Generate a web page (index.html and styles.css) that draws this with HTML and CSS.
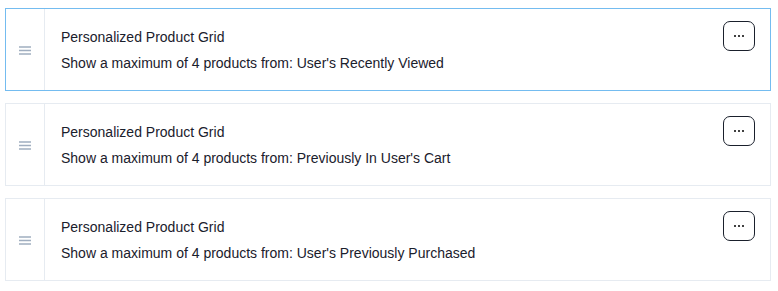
FILE: index.html
```html
<!DOCTYPE html>
<html lang="en">
<head>
    <meta charset="UTF-8">
    <meta name="viewport" content="width=device-width, initial-scale=1.0">
    <title>Blocks</title>
    <link rel="stylesheet" href="styles.css">
</head>
<body>
    <div class="block-list">
        <div class="block active">
            <div class="handle">
                <svg width="12" height="9" viewBox="0 0 12 9"><path d="M0 1h12M0 4.5h12M0 8h12" stroke="#a0aec0" stroke-width="1.3"/></svg>
            </div>
            <div class="body">
                <div class="title">Personalized Product Grid</div>
                <div class="desc">Show a maximum of 4 products from: User's Recently Viewed</div>
            </div>
            <button class="more"><span></span><span></span><span></span></button>
        </div>
        <div class="block">
            <div class="handle">
                <svg width="12" height="9" viewBox="0 0 12 9"><path d="M0 1h12M0 4.5h12M0 8h12" stroke="#a0aec0" stroke-width="1.3"/></svg>
            </div>
            <div class="body">
                <div class="title">Personalized Product Grid</div>
                <div class="desc">Show a maximum of 4 products from: Previously In User's Cart</div>
            </div>
            <button class="more"><span></span><span></span><span></span></button>
        </div>
        <div class="block">
            <div class="handle">
                <svg width="12" height="9" viewBox="0 0 12 9"><path d="M0 1h12M0 4.5h12M0 8h12" stroke="#a0aec0" stroke-width="1.3"/></svg>
            </div>
            <div class="body">
                <div class="title">Personalized Product Grid</div>
                <div class="desc">Show a maximum of 4 products from: User's Previously Purchased</div>
            </div>
            <button class="more"><span></span><span></span><span></span></button>
        </div>
    </div>
</body>
</html>
```
FILE: styles.css
```css
* {
    box-sizing: border-box;
}

body {
    margin: 0;
    padding: 8px 7px 8px 5px;
    background: #fff;
    font-family: "Liberation Sans", Arial, sans-serif;
    font-size: 14px;
    color: #1a202c;
}

.block-list {
    display: flex;
    flex-direction: column;
    gap: 12px;
}

.block {
    display: flex;
    align-items: stretch;
    height: 83px;
    border: 1px solid #e6ebf1;
    background: #fff;
}

.block.active {
    border-color: #74bcf0;
}

.handle {
    width: 39px;
    flex-shrink: 0;
    display: flex;
    align-items: center;
    justify-content: center;
    border-right: 1px solid #e6ebf1;
    padding-top: 2px;
}

.body {
    flex: 1;
    padding: 18px 16px 0;
}

.title,
.desc {
    line-height: 20px;
}

.desc {
    margin-top: 6px;
}

.more {
    flex-shrink: 0;
    align-self: flex-start;
    margin: 12px 15px 0 0;
    width: 32px;
    height: 30px;
    padding: 0;
    border: 1px solid #1a202c;
    border-radius: 7px;
    background: #fff;
    display: flex;
    align-items: center;
    justify-content: center;
    gap: 1.5px;
    cursor: pointer;
}

.more span {
    width: 2.5px;
    height: 2.5px;
    border-radius: 50%;
    background: #000;
}
```
